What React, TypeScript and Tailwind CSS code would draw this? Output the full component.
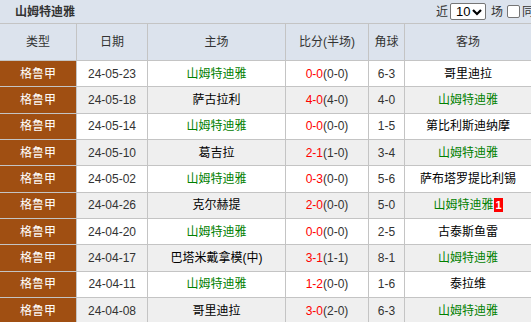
import React from 'react';

type Match = {
    date: string;
    home: string;
    score: string;
    half: string;
    corner: string;
    away: string;
    badge?: string;
};

const TEAM = '山姆特迪雅';

const matches: Match[] = [
    { date: '24-05-23', home: TEAM, score: '0-0', half: '(0-0)', corner: '6-3', away: '哥里迪拉' },
    { date: '24-05-18', home: '萨古拉利', score: '4-0', half: '(4-0)', corner: '4-0', away: TEAM },
    { date: '24-05-14', home: TEAM, score: '0-0', half: '(0-0)', corner: '1-5', away: '第比利斯迪纳摩' },
    { date: '24-05-10', home: '葛吉拉', score: '2-1', half: '(1-0)', corner: '3-4', away: TEAM },
    { date: '24-05-02', home: TEAM, score: '0-3', half: '(0-0)', corner: '5-6', away: '萨布塔罗提比利锡' },
    { date: '24-04-26', home: '克尔赫提', score: '2-0', half: '(0-0)', corner: '5-0', away: TEAM, badge: '1' },
    { date: '24-04-20', home: TEAM, score: '0-0', half: '(0-0)', corner: '2-5', away: '古泰斯鱼雷' },
    { date: '24-04-17', home: '巴塔米戴拿模(中)', score: '3-1', half: '(1-1)', corner: '8-1', away: TEAM },
    { date: '24-04-11', home: TEAM, score: '1-2', half: '(0-0)', corner: '1-6', away: '泰拉维' },
    { date: '24-04-08', home: '哥里迪拉', score: '3-0', half: '(2-0)', corner: '6-3', away: TEAM },
];

const headers = ['类型', '日期', '主场', '比分(半场)', '角球', '客场'];

const teamClass = (name: string) => (name === TEAM ? 'text-[#008000]' : 'text-black');

const App: React.FC = () => {
    return (
        <div className="w-[531px] h-[322px] overflow-hidden bg-white text-[12px] text-[#333] font-['Liberation_Sans','Noto_Sans_CJK_SC',sans-serif]">
            {/* title bar */}
            <div className="h-[23px] bg-[#dce3ed] flex items-center justify-between whitespace-nowrap">
                <span className="pl-[15px] font-bold text-[12px] text-[#333]">{TEAM}</span>
                <div className="flex items-center shrink-0 -mr-[27px]">
                    <span>近</span>
                    <div className="ml-[2px] w-[36px] h-[17px] bg-white border border-[#767676] rounded-[2px] flex items-center justify-between pl-[5px] pr-[3px] text-[13px] text-black">
                        <span>10</span>
                        <svg width="10" height="8" viewBox="0 0 10 8">
                            <path d="M1 2 L5 6 L9 2" fill="none" stroke="#000" strokeWidth="2.2" />
                        </svg>
                    </div>
                    <span className="ml-[5px]">场</span>
                    <div className="ml-[4px] w-[13px] h-[13px] bg-white border border-[#767676] rounded-[2px]" />
                    <span className="ml-[2px]">同主客</span>
                </div>
            </div>

            {/* table */}
            <div className="grid grid-cols-[76px_70px_137px_82px_35px_1fr] gap-px bg-[#c4c4c4] border-t border-[#c4c4c4]">
                {headers.map(h => (
                    <div key={h} className="h-[36px] bg-[#dce3ed] flex items-center justify-center text-[#333]">
                        {h}
                    </div>
                ))}
                {matches.map((m, i) => {
                    const rowBg = i % 2 === 0 ? 'bg-white' : 'bg-[#efefef]';
                    return (
                        <React.Fragment key={m.date}>
                            <div className="h-[25.33px] bg-[#a04f12] text-white flex items-center justify-center">格鲁甲</div>
                            <div className={`h-[25.33px] ${rowBg} flex items-center justify-center text-[#333]`}>{m.date}</div>
                            <div className={`h-[25.33px] ${rowBg} flex items-center justify-center ${teamClass(m.home)}`}>{m.home}</div>
                            <div className={`h-[25.33px] ${rowBg} flex items-center justify-center`}>
                                <span className="text-[#ff0000]">{m.score}</span>
                                <span className="text-[#333]">{m.half}</span>
                            </div>
                            <div className={`h-[25.33px] ${rowBg} flex items-center justify-center text-[#333]`}>{m.corner}</div>
                            <div className={`h-[25.33px] ${rowBg} flex items-center justify-center ${teamClass(m.away)}`}>
                                <span>{m.away}</span>
                                {m.badge && (
                                    <span className="ml-px bg-[#ff0000] text-white font-bold text-[11px] leading-[14px] px-[1px]">{m.badge}</span>
                                )}
                            </div>
                        </React.Fragment>
                    );
                })}
            </div>
        </div>
    );
};

export default App;
